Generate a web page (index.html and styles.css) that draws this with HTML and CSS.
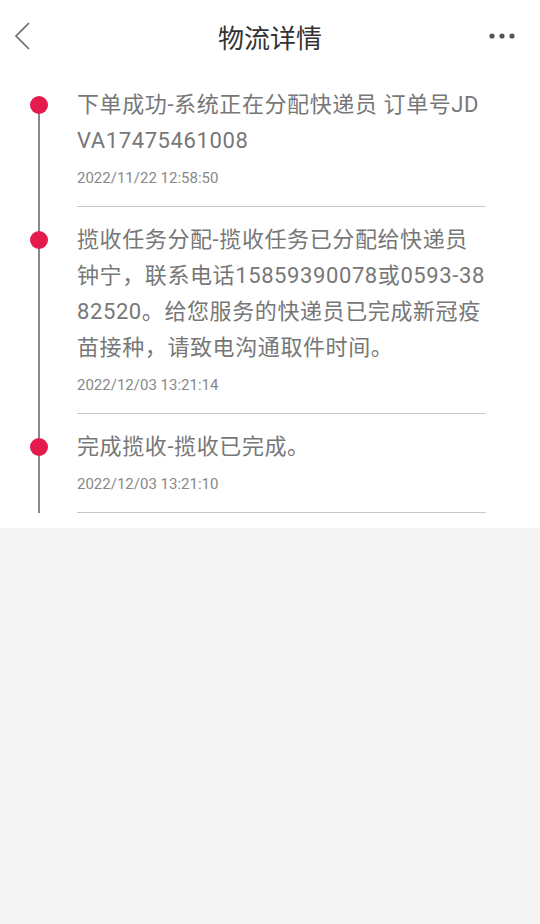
FILE: index.html
```html
<!DOCTYPE html>
<html lang="zh-CN">
<head>
<meta charset="utf-8">
<title>物流详情</title>
<link rel="stylesheet" href="styles.css">
</head>
<body>
<div class="page">
  <header class="nav">
    <button class="nav-back" aria-label="返回">
      <svg width="20" height="30" viewBox="0 0 20 30"><polyline points="15,2 2,15 15,28" fill="none" stroke="#666" stroke-width="1.6" stroke-linejoin="miter"/></svg>
    </button>
    <h1 class="nav-title">物流详情</h1>
    <button class="nav-more" aria-label="更多">
      <svg width="28" height="8" viewBox="0 0 28 8"><circle cx="4" cy="4" r="2.6" fill="#555"/><circle cx="14" cy="4" r="2.6" fill="#555"/><circle cx="24" cy="4" r="2.6" fill="#555"/></svg>
    </button>
  </header>
  <ul class="timeline">
    <li class="event">
      <div class="rail"><span class="dot"></span></div>
      <div class="content">
        <p class="desc">下单成功-系统正在分配快递员 订单号JDVA17475461008</p>
        <p class="time">2022/11/22 12:58:50</p>
      </div>
    </li>
    <li class="event">
      <div class="rail"><span class="dot"></span></div>
      <div class="content">
        <p class="desc">揽收任务分配-揽收任务已分配给快递员钟宁，联系电话15859390078或0593-3882520。给您服务的快递员已完成新冠疫苗接种，请致电沟通取件时间。</p>
        <p class="time">2022/12/03 13:21:14</p>
      </div>
    </li>
    <li class="event">
      <div class="rail"><span class="dot"></span></div>
      <div class="content">
        <p class="desc">完成揽收-揽收已完成。</p>
        <p class="time">2022/12/03 13:21:10</p>
      </div>
    </li>
  </ul>
</div>
</body>
</html>
```
FILE: styles.css
```css
* { box-sizing: border-box; }
html, body {
  margin: 0;
  padding: 0;
  background: #f4f4f4;
  font-family: Roboto, "Noto Sans CJK SC", sans-serif;
}
.page {
  background: #fff;
}
.nav {
  height: 72px;
  display: flex;
  align-items: center;
  justify-content: space-between;
  padding: 0 24px 0 14px;
  position: relative;
}
.nav-back, .nav-more {
  border: 0;
  background: none;
  padding: 0;
  display: flex;
  align-items: center;
}
.nav-title {
  position: absolute;
  left: 0;
  right: 0;
  text-align: center;
  margin: 0;
  font-size: 26px;
  font-weight: 400;
  color: #333;
  pointer-events: none;
  font-family: "Noto Sans CJK SC", sans-serif;
}
.timeline {
  list-style: none;
  margin: 0;
  padding: 0 0 15px 0;
}
.event {
  display: flex;
}
.rail {
  width: 77px;
  flex: none;
  position: relative;
}
.rail::before {
  content: "";
  position: absolute;
  left: 38px;
  top: 0;
  bottom: 0;
  width: 2px;
  background: #8a8a8a;
}
.event:first-child .rail::before {
  top: 33px;
}
.dot {
  position: absolute;
  left: 30px;
  top: 24px;
  width: 18px;
  height: 18px;
  border-radius: 50%;
  background: #e41b4c;
}
.content {
  width: 409px;
  padding: 15px 0 18px;
  border-bottom: 1px solid #c8c8c8;
}
.desc {
  margin: 0;
  font-size: 22px;
  line-height: 36px;
  letter-spacing: 0.6px;
  color: #777;
  word-break: break-all;
}
.time {
  margin: 9px 0 0;
  font-size: 15px;
  line-height: 20px;
  color: #888;
}
```
